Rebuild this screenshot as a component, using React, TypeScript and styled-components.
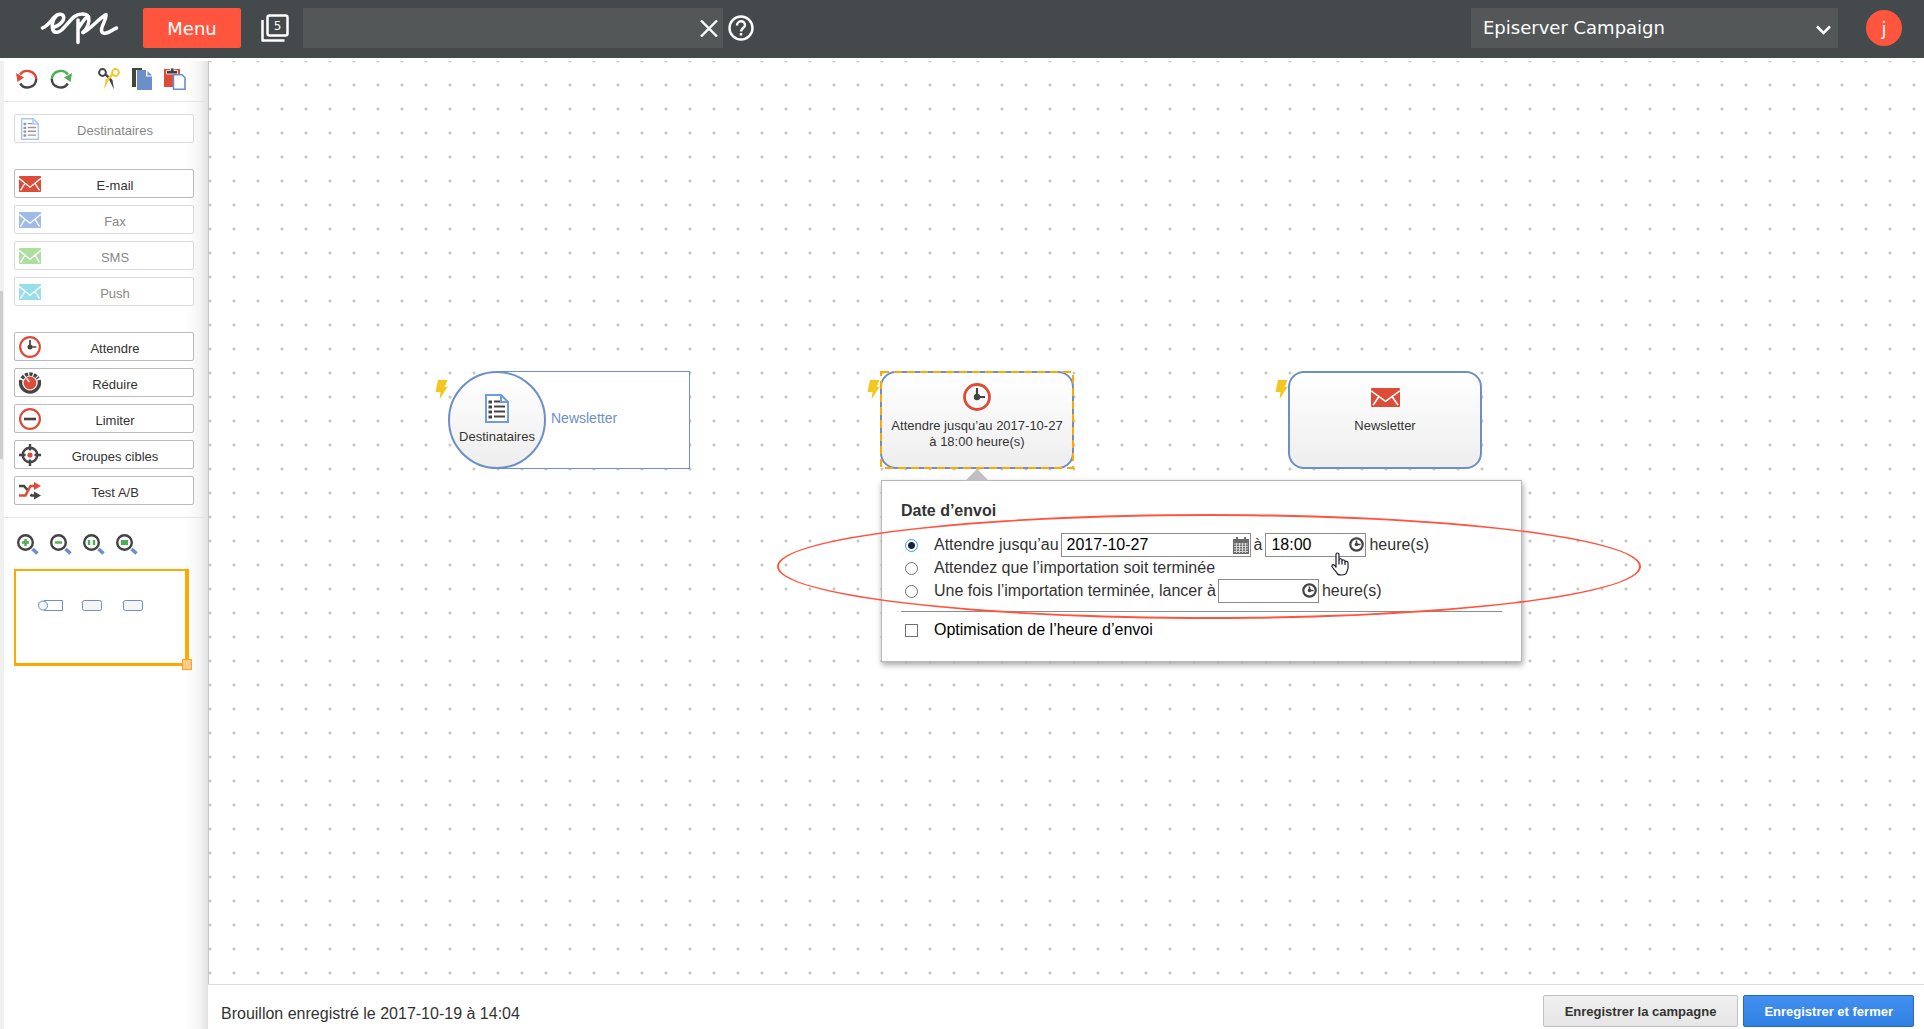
import React from 'react';
import styled, { createGlobalStyle, css } from 'styled-components';

const RED = '#dd4b39';
const CORAL = '#ff553e';
const INK = '#444444';
const BLUE = '#6c8fc9';
const GREEN = '#4caf50';
const ORANGE = '#ffa800';

const GlobalStyle = createGlobalStyle`
  *, *::before, *::after { box-sizing: border-box; }
  body {
    margin: 0;
    background: #fff;
    color: #333;
    font-family: "Liberation Sans", Arial, sans-serif;
    font-size: 16px;
  }
  button, input, select { font: inherit; color: inherit; margin: 0; }
  button { cursor: pointer; }
  svg { display: block; flex: none; }
`;

const Page = styled.div`
  display: flex;
  flex-direction: column;
  min-height: 100vh;
`;

/* ---------- header ---------- */

const Header = styled.header`
  display: flex;
  align-items: center;
  height: 58px;
  padding: 0 22px 2px 40px;
  background: #44494b;
  color: #fff;
  font-family: Verdana, "DejaVu Sans", sans-serif;
  font-size: 18px;
  margin-bottom: 3px;
`;

const LogoLink = styled.a`
  display: block;
  margin-right: 24px;
`;

const MenuButton = styled.button`
  width: 98px;
  height: 40px;
  padding: 0;
  border: 0;
  border-radius: 2px;
  background: ${CORAL};
`;

const PlainButton = styled.button`
  display: block;
  padding: 0;
  border: 0;
  background: none;
`;

const TabsButton = styled(PlainButton)`
  margin: 0 14px 0 20px;
`;

const SearchBox = styled.div`
  position: relative;
  flex: 0 1 420px;
  margin-right: 5px;
`;

const SearchInput = styled.input`
  display: block;
  width: 100%;
  height: 40px;
  padding: 0 40px 0 12px;
  border: 0;
  background: #535757;
`;

const ClearButton = styled(PlainButton)`
  position: absolute;
  top: 12px;
  right: 5px;
`;

const ProductBox = styled.div`
  position: relative;
  flex: 0 1 367px;
  margin: 0 28px 0 auto;
`;

const ProductSelect = styled.select`
  appearance: none;
  display: block;
  width: 100%;
  height: 40px;
  padding: 0 40px 2px 12px;
  border: 0;
  border-radius: 0;
  background: #535757;
`;

const ProductArrow = styled.svg`
  position: absolute;
  top: 17px;
  right: 7px;
  pointer-events: none;
`;

const Avatar = styled.button`
  width: 36px;
  height: 36px;
  padding: 0;
  border: 0;
  border-radius: 50%;
  background: ${CORAL};
`;

/* ---------- body ---------- */

const Body = styled.div`
  display: flex;
  flex: 1;
`;

const ScrollTrack = styled.div`
  width: 4px;
  padding-top: 230px;
  background: #f0f0f0;
`;

const ScrollThumb = styled.div`
  width: 3px;
  height: 168px;
  background: #cdcdcd;
`;

const Sidebar = styled.aside`
  flex: none;
  width: 204px;
  background: linear-gradient(to left, #e2e2e2, #f4f4f4 8px, #fff 22px);
`;

const Tools = styled.div`
  display: flex;
  align-items: center;
  gap: 12px;
  height: 41px;
  padding: 0 12px 4px;
  border-bottom: 1px solid #e4e4e4;
`;

const ToolGap = styled.span`
  width: 2px;
`;

const Elements = styled.div`
  display: flex;
  flex-direction: column;
  gap: 26px;
  padding: 12px 14px 12px 10px;
  border-bottom: 1px solid #e4e4e4;
`;

const ElementGroup = styled.div`
  display: flex;
  flex-direction: column;
  gap: 7px;
`;

const ElementButton = styled.button`
  display: flex;
  align-items: center;
  height: 29px;
  padding: 0 4px;
  border: 1px solid #bbb;
  border-radius: 2px;
  background: #fff;
  font-size: 13px;
  line-height: 16px;
  ${(p) =>
    p.disabled &&
    css`
      border-color: #dadada;
      color: #888;
      cursor: default;
      svg { opacity: 0.55; }
    `}
`;

const ElementLabel = styled.span`
  flex: 1;
  padding-top: 5px;
  text-align: center;
`;

const ZoomTools = styled.div`
  display: flex;
  gap: 11px;
  padding: 16px 13px 13px;
`;

const MiniMap = styled.div`
  position: relative;
  width: 175px;
  height: 97px;
  margin-left: 10px;
  border: solid ${ORANGE};
  border-width: 2px 4px 3px 2px;
  background: #fff;
`;

const MiniHandle = styled.span`
  position: absolute;
  right: -7px;
  bottom: -7px;
  width: 10px;
  height: 11px;
  border: 1px solid ${ORANGE};
  background: #ffc896;
`;

const Workspace = styled.main`
  display: flex;
  flex: 1;
  flex-direction: column;
  min-width: 0;
`;

const Canvas = styled.section`
  position: relative;
  flex: 1;
  min-height: 640px;
  border-left: 1px solid #c8c8c8;
  background: #fff radial-gradient(circle at 2px 2px, #c8c8c8 1px, transparent 2px) -1px -2px / 24px 24px;
  overflow: hidden;
`;

/* ---------- diagram nodes ---------- */

const NodeSpot = styled.div<{ $x: number; $y: number }>`
  position: absolute;
  left: ${(p) => p.$x}px;
  top: ${(p) => p.$y}px;
`;

const Bolt = styled.svg`
  position: absolute;
  left: -13px;
  top: 9px;
`;

const nodeText = css`
  font-size: 13px;
  line-height: 16px;
  text-align: center;
`;

const Card = styled.div<{ $selected?: boolean; $pad: number }>`
  ${nodeText}
  position: relative;
  display: flex;
  flex-direction: column;
  align-items: center;
  width: 194px;
  height: 98px;
  padding: ${(p) => p.$pad}px 6px 0;
  border: 2px solid ${BLUE};
  border-radius: 16px;
  background: linear-gradient(#fff, #eee);
`;

const CardText = styled.span<{ $gap: number }>`
  margin-top: ${(p) => p.$gap}px;
`;

const Selection = styled.svg`
  position: absolute;
  left: 0;
  top: 0;
`;

const StartNode = styled.div`
  position: relative;
  display: flex;
  align-items: center;
  width: 242px;
  height: 98px;
`;

const StartFrame = styled.div`
  position: absolute;
  inset: 0 0 0 49px;
  border: 1px solid ${BLUE};
  border-left: 0;
  background: #fff;
`;

const StartCircle = styled.div`
  ${nodeText}
  position: relative;
  display: flex;
  flex-direction: column;
  align-items: center;
  width: 98px;
  height: 98px;
  padding-top: 21px;
  border: 2px solid ${BLUE};
  border-radius: 50%;
  background: linear-gradient(#fff, #eee);
`;

const StartLabel = styled.span`
  position: relative;
  padding: 0 0 4px 5px;
  color: ${BLUE};
  font-size: 14px;
`;

/* ---------- settings bubble ---------- */

const Bubble = styled.form`
  position: relative;
  width: 641px;
  padding: 21px 19px 20px;
  border: 1px solid #b8b8b8;
  background: #fff;
  box-shadow: 1px 3px 6px rgba(0, 0, 0, 0.35);
`;

const BubbleArrow = styled.svg`
  position: absolute;
  left: 83px;
  top: -12px;
`;

const BubbleTitle = styled.h2`
  margin: 0 0 13px;
  font-size: 16px;
  line-height: 18px;
`;

const Option = styled.div<{ $height: number }>`
  display: flex;
  align-items: center;
  gap: 2px;
  height: ${(p) => p.$height}px;
  padding-left: 4px;
  white-space: nowrap;
`;

const Radio = styled.input`
  appearance: none;
  flex: none;
  width: 13px;
  height: 13px;
  border: 1px solid #707070;
  border-radius: 50%;
  background: #fff;
  &:checked {
    border-color: #3399ff;
    background: radial-gradient(circle, #1b2138 3px, #fff 4px);
  }
`;

const Check = styled(Radio)`
  border-radius: 0;
`;

const OptionLabel = styled.label<{ $dark?: boolean }>`
  padding-left: 14px;
  color: ${(p) => (p.$dark ? '#000' : '#333')};
`;

const Unit = styled.span`
  padding: 0 1px;
`;

const Field = styled.span<{ $width: number }>`
  position: relative;
  width: ${(p) => p.$width}px;
`;

const FieldInput = styled.input`
  display: block;
  width: 100%;
  height: 24px;
  padding: 0 24px 0 5px;
  border: 1px solid #8c8c8c;
  background: #fff;
  color: #000;
`;

const FieldButton = styled(PlainButton)`
  position: absolute;
  top: 4px;
  right: 2px;
`;

const Rule = styled.hr`
  height: 1px;
  margin: 8px 0 7px;
  border: 0;
  background: #8c8c8c;
`;

const BubbleEnd = styled.div`
  height: 12px;
`;

const Highlight = styled.div`
  position: absolute;
  left: 568px;
  top: 453px;
  width: 864px;
  height: 105px;
  border: 2px solid #ff553e;
  border-radius: 50%;
  pointer-events: none;
`;

const Pointer = styled.svg`
  position: absolute;
  left: 1122px;
  top: 491px;
  pointer-events: none;
`;

/* ---------- footer ---------- */

const Footer = styled.footer`
  display: flex;
  align-items: center;
  gap: 5px;
  height: 45px;
  padding: 0 10px 0 13px;
  border-top: 1px solid #ddd;
`;

const SaveState = styled.p`
  margin: 0 auto 0 0;
  padding-top: 14px;
`;

const FooterButton = styled.button<{ $primary?: boolean }>`
  height: 32px;
  margin-top: 8px;
  padding: 0 ${(p) => (p.$primary ? 20 : 21)}px;
  border: 1px solid ${(p) => (p.$primary ? '#2568c4' : '#c0c0c0')};
  border-radius: 2px;
  background: ${(p) => (p.$primary ? 'linear-gradient(#4290f0, #3080e4)' : 'linear-gradient(#f0f0f0, #e6e6e6)')};
  color: ${(p) => (p.$primary ? '#fff' : '#333')};
  font-size: 13px;
  font-weight: bold;
`;

/* ---------- icons ---------- */

const Logo = () => (
  <svg width="79" height="33" viewBox="0 0 79 33" fill="none" stroke="#fff" strokeWidth="3.500" strokeLinecap="round" strokeLinejoin="round">
    <path d="M2.500 16 4.500 15C8 13 10.500 9.500 13.500 6 16.500 2.500 19 2 21.500 2.500 24.500 3.500 24.500 7.500 21.500 10.500 19 13 16 15 13 15.500" />
    <path d="M16.500 3.500C13 7.500 11.500 12 12.500 16.500 13.500 21.500 18 21 21 18.500 26.500 14 30 8 34.500 4.500 39 1 46 1 48.500 4.500 50 10 47 17.500 43 20.500" />
    <path d="M38 8V30.500M38 17C41 12 45 5 48.500 4.500M43 20.500C50 18 57 8 66 2.500 66.500 7 61.500 14 61.500 18 61.500 22 65 21.500 68 20.500 71 19.500 73.500 17 76.500 16" />
  </svg>
);

const TabsIcon = () => (
  <svg width="28" height="28" viewBox="0 0 28 28" fill="none" stroke="#fff" strokeWidth="2.500">
    <rect x="6.500" y="1.500" width="20" height="20" rx="2" />
    <path d="M1.500 6V26.500H23.500" strokeLinejoin="round" />
    <text x="16.500" y="16" fill="#fff" stroke="none" fontSize="12" textAnchor="middle">5</text>
  </svg>
);

const HelpIcon = () => (
  <svg width="26" height="26" viewBox="0 0 26 26" fill="none" stroke="#fff" strokeWidth="2.400">
    <circle cx="13" cy="13" r="11.500" />
    <path d="M9 10.500C9 8 10.700 6.300 13 6.300S17 8 17 10.200C17 12.800 13 13.300 13 16.500" />
    <path d="M13 18V20.500" />
  </svg>
);

const UndoIcon = ({ color = RED, flip = false }) => (
  <svg width="22" height="22" viewBox="0 0 22 22" fill="none" strokeWidth="2.400">
    <g transform={flip ? 'translate(22 0) scale(-1 1)' : undefined}>
      <path d="M4 6.500A9 8.800 0 0 1 20.200 11" stroke={color} />
      <path d="M20.200 11A8.700 8.700 0 0 1 4.200 15.500" stroke={INK} />
      <path d="M0 5 8 9.500 1.500 14Z" fill={color} />
    </g>
  </svg>
);

const ScissorsIcon = () => (
  <svg width="22" height="22" viewBox="0 0 22 22" fill="none">
    <circle cx="4.500" cy="4.500" r="3.400" stroke={INK} strokeWidth="2" />
    <path d="M6.500 7 11 11.500 16 21.500 14.500 12 9 6Z" fill={INK} />
    <circle cx="17.500" cy="4.500" r="3.400" stroke="#f5c72a" strokeWidth="2" />
    <path d="M15.500 7 10.500 12.500 6 21.500 7.500 12 13.500 5.500Z" fill="#f5c72a" />
  </svg>
);

const CopyIcon = () => (
  <svg width="20" height="22" viewBox="0 0 20 22">
    <path d="M0 0H10V2H4V19H0Z" fill={INK} />
    <path d="M5 2H14V8.500H20V22H5Z" fill={BLUE} />
    <path d="M15.500 3 20 7.500H15.500Z" fill={BLUE} />
  </svg>
);

const PasteIcon = () => (
  <svg width="22" height="22" viewBox="0 0 22 22">
    <path d="M0 1H16V6H9V19H0Z" fill={RED} />
    <path d="M2.500 2.500H6.500V0H10V2.500H13.500V6H2.500Z" fill={INK} stroke="#fff" strokeWidth="0.800" />
    <path d="M9.500 6.800H18L21 9.800V21.200H9.500Z" fill="#fff" stroke={BLUE} strokeWidth="1.600" />
  </svg>
);

const ListIcon = ({ width = 22, height = 22 }) => (
  <svg width={width} height={height} viewBox="0 0 24 29" fill="none">
    <path d="M1 1H16L23 8V28H1Z" fill="#fff" stroke="#6f9be0" strokeWidth="2" />
    <path d="M16 1V8H23" stroke="#6f9be0" strokeWidth="2" />
    <path d="M3.500 8H7M3.500 13H7M3.500 18H7M3.500 23H7" stroke={INK} strokeWidth="3.200" />
    <path d="M9 7.500H15M9 12.500H20M9 17.500H20M9 22.500H20" stroke={INK} strokeWidth="1.800" />
  </svg>
);

const MailIcon = ({ color = RED, width = 22, height = 16 }) => (
  <svg width={width} height={height} viewBox="0 0 29 20" preserveAspectRatio="none" fill="none">
    <rect width="29" height="20" rx="1" fill={color} />
    <path d="M0 3 14.500 14 29 3M8 9 2 18M21 9 27 18" stroke="#fff" strokeWidth="1.700" />
  </svg>
);

const ClockIcon = ({ size = 22 }) => (
  <svg width={size} height={size} viewBox="0 0 28 28" fill="none">
    <circle cx="14" cy="14" r="12.500" stroke={RED} strokeWidth="2.800" />
    <circle cx="14" cy="14" r="3.200" fill={INK} />
    <path d="M14 5V14H22" stroke={INK} strokeWidth="2.200" />
  </svg>
);

const ReduceIcon = () => (
  <svg width="22" height="22" viewBox="0 0 22 22" fill="none">
    <path d="M2 8A9.400 9.400 0 1 0 20 8" stroke={INK} strokeWidth="3.400" />
    <path d="M3 6.500A9.400 9.400 0 0 1 19 6.500" stroke={INK} strokeWidth="3.600" strokeDasharray="3.200 1.200" />
    <circle cx="11" cy="11" r="6.400" fill={RED} />
    <path d="M7.500 6.500 10.500 10" stroke="#fff" strokeWidth="1.600" />
  </svg>
);

const LimitIcon = () => (
  <svg width="22" height="22" viewBox="0 0 22 22" fill="none">
    <circle cx="11" cy="11" r="9.900" stroke={RED} strokeWidth="2.200" />
    <path d="M5 11H17" stroke={INK} strokeWidth="2.600" />
  </svg>
);

const TargetIcon = () => (
  <svg width="22" height="22" viewBox="0 0 22 22" fill="none">
    <circle cx="11" cy="11" r="7.300" stroke={INK} strokeWidth="2.400" />
    <path d="M11 0V6.500M11 15.500V22M0 11H6.500M15.500 11H22" stroke={INK} strokeWidth="2.400" />
    <circle cx="11" cy="11" r="2.600" fill={RED} />
  </svg>
);

const ShuffleIcon = () => (
  <svg width="22" height="18" viewBox="0 0 22 18" fill="none" strokeWidth="2.600">
    <path d="M0 4H5L8.500 8M11.500 12.500 12.500 13.500H17" stroke={INK} />
    <path d="M15 9.500 22 13.500 15 17.500Z" fill={INK} />
    <path d="M0 13.500H6.500L11.500 4H17" stroke={RED} />
    <path d="M15 0 22 4 15 8Z" fill={RED} />
  </svg>
);

const ZoomIcon = ({ children }: { children: React.ReactNode }) => (
  <svg width="22" height="22" viewBox="0 0 22 22" fill="none">
    <path d="M15.500 15 20.500 19.500" stroke={BLUE} strokeWidth="3.600" />
    <circle cx="8.500" cy="8.500" r="7.300" fill="#fff" stroke={INK} strokeWidth="2.400" />
    {children}
  </svg>
);

const MiniDiagram = () => (
  <svg width="130" height="62" viewBox="0 0 130 62" fill="none" stroke={BLUE}>
    <path d="M28 29.500H46.500V39.500H28" />
    <circle cx="27" cy="34.500" r="4.500" fill="#f5f5f5" />
    <rect x="66.500" y="29.500" width="19" height="10" rx="2" fill="#f5f5f5" />
    <rect x="107.500" y="29.500" width="19" height="10" rx="2" fill="#f5f5f5" />
    <path d="M22.500 31V32M65.500 31V32M106.500 31V32" stroke="#f5c72a" />
  </svg>
);

const BoltIcon = () => (
  <Bolt width="13" height="20" viewBox="0 0 13 20">
    <path d="M3 0H12.500L9.500 7H12.500L4.500 19.500 5.500 12H0.500Z" fill="#f5c71e" />
  </Bolt>
);

const CalendarIcon = () => (
  <svg width="16" height="17" viewBox="0 0 16 17">
    <path d="M0 2H3V0H5V2H11V0H13V2H16V17H0Z" fill="#6a6a6a" />
    <path d="M1 7H15M1 9.500H15M1 12H15M1 14.500H15M3.500 6V16M6.500 6V16M9.500 6V16M12.500 6V16" stroke="#ddd" strokeWidth="0.900" />
  </svg>
);

const TimeIcon = () => (
  <svg width="15" height="15" viewBox="0 0 15 15" fill="none" stroke="#444">
    <circle cx="7.500" cy="7.500" r="6.200" strokeWidth="2.200" />
    <path d="M7.500 3.500V7.500H11.500" strokeWidth="1.600" />
    <circle cx="7.500" cy="7.500" r="1.800" fill="#444" stroke="none" />
  </svg>
);

/* ---------- page ---------- */

type Item = { label: string; icon: React.ReactNode; disabled?: boolean };

const groups: Item[][] = [
  [{ label: 'Destinataires', icon: <ListIcon />, disabled: true }],
  [
    { label: 'E-mail', icon: <MailIcon /> },
    { label: 'Fax', icon: <MailIcon color="#5585d8" />, disabled: true },
    { label: 'SMS', icon: <MailIcon color="#6dc653" />, disabled: true },
    { label: 'Push', icon: <MailIcon color="#48c4da" />, disabled: true },
  ],
  [
    { label: 'Attendre', icon: <ClockIcon /> },
    { label: 'Réduire', icon: <ReduceIcon /> },
    { label: 'Limiter', icon: <LimitIcon /> },
    { label: 'Groupes cibles', icon: <TargetIcon /> },
    { label: 'Test A/B', icon: <ShuffleIcon /> },
  ],
];

export default function App() {
  return (
    <Page>
      <GlobalStyle />
      <Header>
        <LogoLink href="#" aria-label="Episerver"><Logo /></LogoLink>
        <MenuButton type="button">Menu</MenuButton>
        <TabsButton type="button" aria-label="Onglets"><TabsIcon /></TabsButton>
        <SearchBox>
          <SearchInput type="text" aria-label="Rechercher" />
          <ClearButton type="button" aria-label="Effacer">
            <svg width="18" height="17" viewBox="0 0 18 17" stroke="#fff" strokeWidth="2.400">
              <path d="M1 0.500 17 16.500M17 0.500 1 16.500" />
            </svg>
          </ClearButton>
        </SearchBox>
        <PlainButton type="button" aria-label="Aide"><HelpIcon /></PlainButton>
        <ProductBox>
          <ProductSelect aria-label="Produit">
            <option>Episerver Campaign</option>
          </ProductSelect>
          <ProductArrow width="15" height="10" viewBox="0 0 15 10" fill="none" stroke="#fff" strokeWidth="2.500">
            <path d="M1 1.500 7.500 8 14 1.500" />
          </ProductArrow>
        </ProductBox>
        <Avatar type="button">j</Avatar>
      </Header>

      <Body>
        <ScrollTrack><ScrollThumb /></ScrollTrack>
        <Sidebar>
          <Tools>
            <PlainButton type="button" aria-label="Annuler"><UndoIcon /></PlainButton>
            <PlainButton type="button" aria-label="Rétablir"><UndoIcon color={GREEN} flip /></PlainButton>
            <ToolGap />
            <PlainButton type="button" aria-label="Couper"><ScissorsIcon /></PlainButton>
            <PlainButton type="button" aria-label="Copier"><CopyIcon /></PlainButton>
            <PlainButton type="button" aria-label="Coller"><PasteIcon /></PlainButton>
          </Tools>
          <Elements>
            {groups.map((group, i) => (
              <ElementGroup key={i}>
                {group.map((item) => (
                  <ElementButton key={item.label} type="button" disabled={item.disabled}>
                    {item.icon}
                    <ElementLabel>{item.label}</ElementLabel>
                  </ElementButton>
                ))}
              </ElementGroup>
            ))}
          </Elements>
          <ZoomTools>
            <PlainButton type="button" aria-label="Agrandir">
              <ZoomIcon><path d="M8.500 5V12M5 8.500H12" stroke={GREEN} strokeWidth="2.400" /></ZoomIcon>
            </PlainButton>
            <PlainButton type="button" aria-label="Réduire la vue">
              <ZoomIcon><path d="M5 8.500H12" stroke={GREEN} strokeWidth="2.400" /></ZoomIcon>
            </PlainButton>
            <PlainButton type="button" aria-label="Taille réelle">
              <ZoomIcon><path d="M6 6V11M11 6V11" stroke={GREEN} strokeWidth="2.400" /></ZoomIcon>
            </PlainButton>
            <PlainButton type="button" aria-label="Ajuster">
              <ZoomIcon><path d="M5 6H12V11H5Z" fill={GREEN} /></ZoomIcon>
            </PlainButton>
          </ZoomTools>
          <MiniMap>
            <MiniDiagram />
            <MiniHandle />
          </MiniMap>
        </Sidebar>

        <Workspace>
          <Canvas>
            <NodeSpot $x={239} $y={310}>
              <BoltIcon />
              <StartNode>
                <StartFrame />
                <StartCircle>
                  <ListIcon width={24} height={29} />
                  <CardText $gap={6}>Destinataires</CardText>
                </StartCircle>
                <StartLabel>Newsletter</StartLabel>
              </StartNode>
            </NodeSpot>
            <NodeSpot $x={671} $y={310}>
              <BoltIcon />
              <Card $pad={10}>
                <ClockIcon size={28} />
                <CardText $gap={7}>Attendre jusqu’au 2017-10-27 à 18:00 heure(s)</CardText>
              </Card>
              <Selection width="194" height="98" fill="none" stroke={ORANGE} strokeWidth="2">
                <rect x="1" y="1" width="192" height="96" strokeDasharray="8 5" />
              </Selection>
            </NodeSpot>
            <NodeSpot $x={1079} $y={310}>
              <BoltIcon />
              <Card $pad={15}>
                <MailIcon width={29} height={19} />
                <CardText $gap={11}>Newsletter</CardText>
              </Card>
            </NodeSpot>
            <NodeSpot $x={672} $y={419}>
              <Bubble>
                <BubbleArrow width="24" height="12" viewBox="0 0 24 12">
                  <path d="M0 12 12 0 24 12Z" fill="#bfbfbf" />
                </BubbleArrow>
                <BubbleTitle>Date d’envoi</BubbleTitle>
                <Option $height={24}>
                  <Radio type="radio" name="mode" id="until" defaultChecked />
                  <OptionLabel htmlFor="until">Attendre jusqu’au</OptionLabel>
                  <Field $width={190}>
                    <FieldInput type="text" aria-label="Date" defaultValue="2017-10-27" />
                    <FieldButton type="button" aria-label="Choisir la date"><CalendarIcon /></FieldButton>
                  </Field>
                  <Unit>à</Unit>
                  <Field $width={101}>
                    <FieldInput type="text" aria-label="Heure" defaultValue="18:00" />
                    <FieldButton type="button" aria-label="Choisir l’heure"><TimeIcon /></FieldButton>
                  </Field>
                  <Unit>heure(s)</Unit>
                </Option>
                <Option $height={22}>
                  <Radio type="radio" name="mode" id="import" />
                  <OptionLabel htmlFor="import">Attendez que l’importation soit terminée</OptionLabel>
                </Option>
                <Option $height={24}>
                  <Radio type="radio" name="mode" id="after" />
                  <OptionLabel htmlFor="after">Une fois l’importation terminée, lancer à</OptionLabel>
                  <Field $width={101}>
                    <FieldInput type="text" aria-label="Heure de lancement" />
                    <FieldButton type="button" aria-label="Choisir l’heure de lancement"><TimeIcon /></FieldButton>
                  </Field>
                  <Unit>heure(s)</Unit>
                </Option>
                <Rule />
                <Option $height={22}>
                  <Check type="checkbox" id="optimise" />
                  <OptionLabel htmlFor="optimise" $dark>Optimisation de l’heure d’envoi</OptionLabel>
                </Option>
              </Bubble>
            </NodeSpot>
            <Highlight />
            <Pointer width="18" height="24" viewBox="0 0 18 24">
              <path d="M5 13V2.500C5 0.500 8 0.500 8 2.500V8C8 6.300 11 6.300 11 8V9C11.300 7.500 14 7.700 14 9.300V10C14.500 8.800 17 9.200 17 11V16C17 18 15.500 19.500 15 21.500 14 23.300 8 23.500 6.500 22 5.500 19.500 2.500 17.500 1 14.500 0.500 13 2.500 12 3.500 13.300L5 15Z" fill="#fff" stroke="#1c1c2e" strokeWidth="1.200" strokeLinejoin="round" />
              <path d="M8 8V12.500M11 9V12.500M14 10V13" stroke="#1c1c2e" strokeWidth="1.200" />
            </Pointer>
          </Canvas>
          <Footer>
            <SaveState>Brouillon enregistré le 2017-10-19 à 14:04</SaveState>
            <FooterButton type="button">Enregistrer la campagne</FooterButton>
            <FooterButton type="button" $primary>Enregistrer et fermer</FooterButton>
          </Footer>
        </Workspace>
      </Body>
    </Page>
  );
}
